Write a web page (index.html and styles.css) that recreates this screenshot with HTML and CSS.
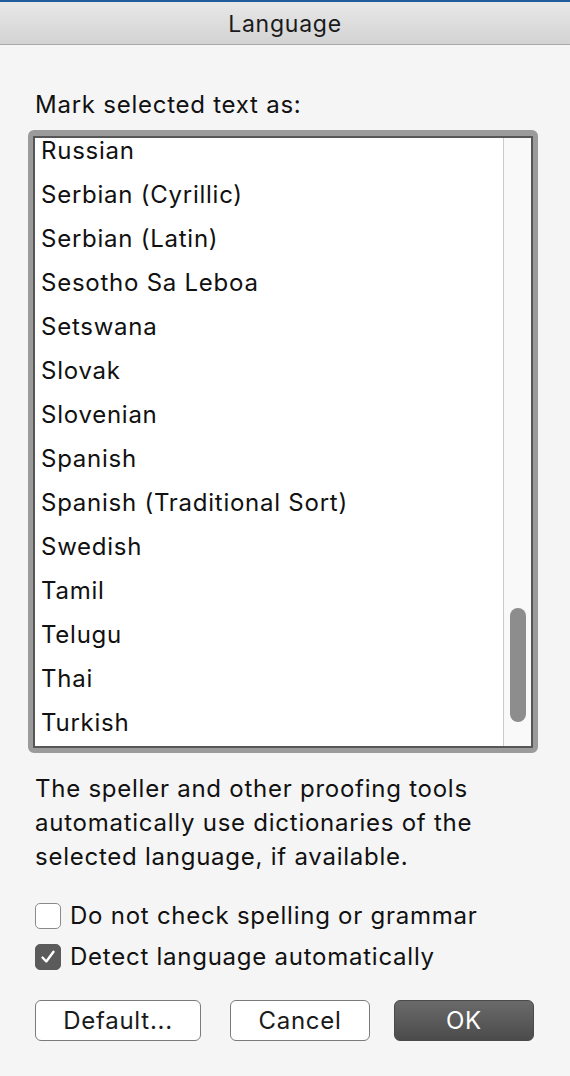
FILE: index.html
```html
<!DOCTYPE html>
<html lang="en">
<head>
    <meta charset="UTF-8">
    <meta name="viewport" content="width=device-width, initial-scale=1.0">
    <title>Language</title>
    <link rel="stylesheet" href="styles.css">
</head>
<body>
    <div class="top-strip"></div>
    <div class="title-bar">Language</div>
    <div class="dialog">
        <div class="label">Mark selected text as:</div>
        <div class="list-frame">
            <div class="list">
                <ul class="items">
                    <li>Russian</li>
                    <li>Serbian (Cyrillic)</li>
                    <li>Serbian (Latin)</li>
                    <li>Sesotho Sa Leboa</li>
                    <li>Setswana</li>
                    <li>Slovak</li>
                    <li>Slovenian</li>
                    <li>Spanish</li>
                    <li>Spanish (Traditional Sort)</li>
                    <li>Swedish</li>
                    <li>Tamil</li>
                    <li>Telugu</li>
                    <li>Thai</li>
                    <li>Turkish</li>
                </ul>
                <div class="scrollbar">
                    <div class="thumb"></div>
                </div>
            </div>
        </div>
        <p class="note">The speller and other proofing tools automatically use dictionaries of the selected language, if available.</p>
        <label class="check-row">
            <span class="box"></span>
            Do not check spelling or grammar
        </label>
        <label class="check-row">
            <span class="box checked">
                <svg width="18" height="18" viewBox="0 0 18 18"><path d="M3.5 9.5 L7.3 13.5 L14.5 3.8" fill="none" stroke="#fff" stroke-width="2.4" stroke-linecap="round" stroke-linejoin="round"/></svg>
            </span>
            Detect language automatically
        </label>
        <div class="buttons">
            <button class="btn default-btn">Default...</button>
            <button class="btn cancel-btn">Cancel</button>
            <button class="btn ok-btn">OK</button>
        </div>
    </div>
</body>
</html>
```

FILE: styles.css
```css
body {
    margin: 0;
    font-family: Inter, "Liberation Sans", Arial, sans-serif;
    letter-spacing: 0.75px;
    background-color: #f5f5f5;
    color: #111;
    width: 570px;
    height: 1076px;
    overflow: hidden;
}
.top-strip {
    height: 2px;
    background-color: #1f5c9c;
}
.title-bar {
    height: 42px;
    line-height: 45px;
    text-align: center;
    font-size: 23px;
    color: #1a1a1a;
    background: linear-gradient(#e8e8e8, #d3d3d3);
    border-bottom: 1px solid #a9a9a9;
}
.dialog {
    padding: 45px 0 0 35px;
}
.label {
    font-size: 24px;
    line-height: 30px;
    height: 30px;
}
.list-frame {
    margin: 10px 0 0 -7px;
    width: 500px;
    height: 612px;
    border: 5px solid #9b9b9b;
    border-top-width: 6px;
    border-radius: 6px;
    background-color: #9b9b9b;
}
.list {
    display: flex;
    height: 612px;
    border: 2px solid #565656;
    box-sizing: border-box;
    background-color: #fff;
    overflow: hidden;
}
.items {
    flex: 1;
    list-style: none;
    margin: -9px 0 0 0;
    padding: 0 0 0 6px;
    font-size: 24px;
}
.items li {
    height: 44px;
    line-height: 44px;
    white-space: nowrap;
}
.scrollbar {
    width: 27px;
    border-left: 1px solid #cbcbcb;
    background-color: #f9f9f9;
    display: flex;
    justify-content: center;
}
.thumb {
    width: 16px;
    height: 114px;
    margin-top: 470px;
    border-radius: 8px;
    background-color: #8d8d8d;
}
.note {
    margin: 19px 0 0 0;
    font-size: 24px;
    line-height: 34px;
    width: 500px;
}
.check-row {
    display: flex;
    align-items: center;
    height: 41px;
    font-size: 24px;
}
.note + .check-row {
    margin-top: 21px;
}
.box {
    width: 24px;
    height: 24px;
    margin-right: 9px;
    border: 1.5px solid #8a8a8a;
    border-radius: 5px;
    background-color: #fff;
    display: flex;
    align-items: center;
    justify-content: center;
}
.box.checked {
    background-color: #5b5b5b;
    border-color: #5b5b5b;
}
.buttons {
    display: flex;
    margin-top: 23px;
}
.btn {
    height: 41px;
    font-family: inherit;
    letter-spacing: inherit;
    font-size: 24px;
    color: #1a1a1a;
    background-color: #fff;
    border: 1.5px solid #7b7b7b;
    border-radius: 6px;
    padding: 0;
}
.default-btn {
    width: 166px;
}
.cancel-btn {
    width: 140px;
    margin-left: 29px;
}
.ok-btn {
    width: 140px;
    margin-left: 24px;
    color: #fff;
    border-color: #4a4a4a;
    background: linear-gradient(#6a6a6a, #4b4b4b);
}
```
